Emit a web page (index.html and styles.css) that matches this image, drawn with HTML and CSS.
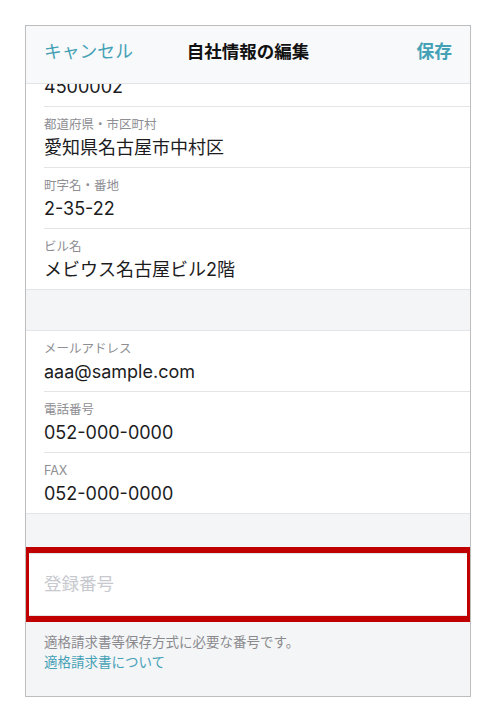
FILE: index.html
```html
<!DOCTYPE html>
<html lang="ja">
<head>
<meta charset="utf-8">
<title>自社情報の編集</title>
<link rel="stylesheet" href="styles.css">
</head>
<body>
<div class="frame">
  <header class="nav">
    <span class="nav-btn nav-cancel">キャンセル</span>
    <span class="nav-title">自社情報の編集</span>
    <span class="nav-btn nav-save">保存</span>
  </header>
  <main class="scroll">
    <div class="scroll-inner">
      <section class="group">
        <div class="row row-top"><span class="value">4500002</span></div>
        <div class="row"><span class="label">都道府県・市区町村</span><span class="value">愛知県名古屋市中村区</span></div>
        <div class="row"><span class="label">町字名・番地</span><span class="value">2-35-22</span></div>
        <div class="row"><span class="label">ビル名</span><span class="value">メビウス名古屋ビル2階</span></div>
      </section>
      <div class="spacer"></div>
      <section class="group">
        <div class="row"><span class="label">メールアドレス</span><span class="value">aaa@sample.com</span></div>
        <div class="row"><span class="label">電話番号</span><span class="value">052-000-0000</span></div>
        <div class="row"><span class="label">FAX</span><span class="value">052-000-0000</span></div>
      </section>
      <div class="spacer spacer-short"></div>
      <section class="group input-group">
        <div class="input-row"><span class="placeholder">登録番号</span></div>
        <div class="highlight"></div>
      </section>
      <div class="footer-note">
        <p class="note">適格請求書等保存方式に必要な番号です。</p>
        <p class="link">適格請求書について</p>
      </div>
    </div>
  </main>
</div>
</body>
</html>
```

FILE: styles.css
```css
* { box-sizing: border-box; }
html, body { margin: 0; padding: 0; background: #ffffff; }
body {
  font-family: Inter, "Noto Sans CJK JP", sans-serif;
  color: #1c1c1e;
  padding: 25px 0 0 25px;
}
.frame {
  width: 446px;
  height: 672px;
  border: 1px solid #bdbdbd;
  background: #f4f5f7;
  display: flex;
  flex-direction: column;
  overflow: hidden;
}
.nav {
  height: 58px;
  flex: none;
  background: #f8f9fa;
  border-bottom: 1px solid #e2e3e5;
  display: grid;
  grid-template-columns: 1fr auto 1fr;
  align-items: center;
  padding: 0 18px 5px 18px;
  font-size: 17.8px;
  line-height: 22px;
}
.nav-btn { color: #45a1b6; }
.nav-cancel { justify-self: start; }
.nav-save { justify-self: end; font-weight: 600; }
.nav-title {
  font-weight: 700;
  color: #111;
  font-size: 17.5px;
}
.scroll { flex: 1; overflow: hidden; }
.scroll-inner { margin-top: -38px; }
.group {
  background: #ffffff;
  border-top: 1px solid #e3e4e6;
  border-bottom: 1px solid #e3e4e6;
}
.group:first-child { border-top: none; }
.row {
  height: 61px;
  margin-left: 18px;
  padding: 10px 0 0 0;
  display: flex;
  flex-direction: column;
  border-bottom: 1px solid #e3e4e6;
}
.row-top {
  justify-content: flex-end;
  padding: 0 0 8px 0;
}
.row:last-child { border-bottom: none; height: 60px; }
.label {
  font-size: 12.5px;
  line-height: 16px;
  color: #8e8e93;
}
.value {
  margin-top: 4px;
  font-size: 18px;
  line-height: 22px;
  color: #1c1c1e;
}
.spacer { height: 40px; }
.spacer-short { height: 39px; }
.input-group { position: relative; }
.input-row {
  height: 61px;
  padding: 0 0 1px 18px;
  display: flex;
  align-items: center;
}
.placeholder {
  font-size: 17.5px;
  line-height: 22px;
  color: #c7c9ce;
}
.highlight {
  position: absolute;
  top: -7px;
  bottom: -7px;
  left: -3px;
  right: -3px;
  border: 6px solid #c00000;
}
.footer-note {
  padding: 16px 18px 0 18px;
}
.footer-note p {
  margin: 0;
  font-size: 13.5px;
  line-height: 20px;
}
.note { color: #8a8a8e; }
.link { color: #45a1b6; }
```
